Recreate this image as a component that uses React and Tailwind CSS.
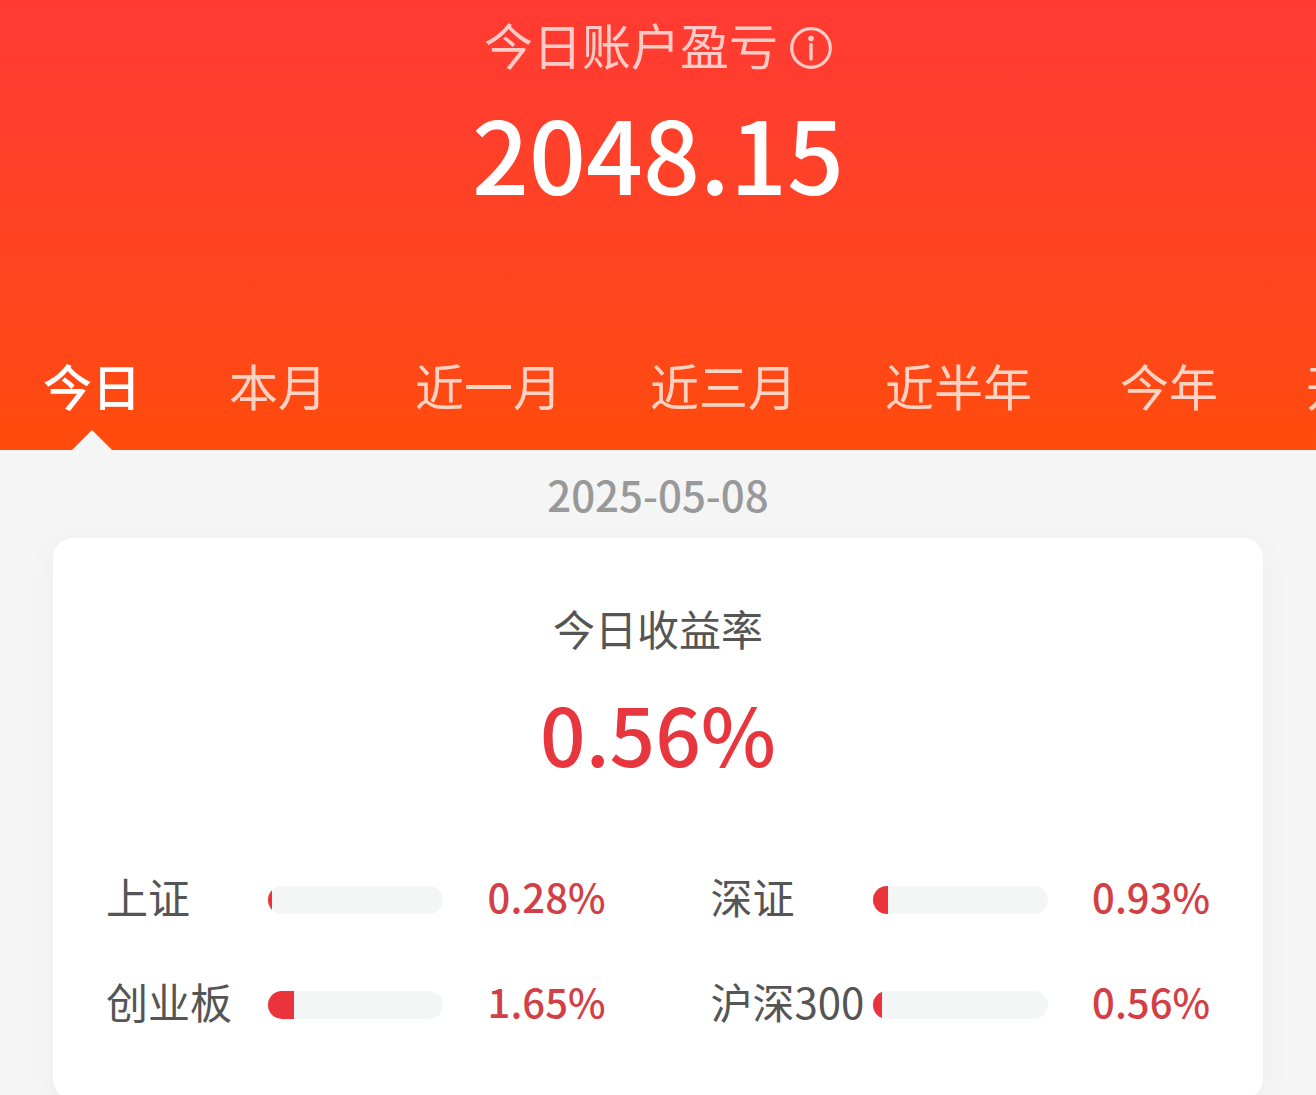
import React, { useState } from 'react';
import clsx from 'clsx';

const PERIODS = ['今日', '本月', '近一月', '近三月', '近半年', '今年', '开户以来'];

const INDEXES = [
  { name: '上证', value: '0.28%', fill: 2.3 },
  { name: '深证', value: '0.93%', fill: 8.6 },
  { name: '创业板', value: '1.65%', fill: 15 },
  { name: '沪深300', value: '0.56%', fill: 5.4 },
];

function InfoIcon() {
  return (
    <svg viewBox="0 0 42 42" className="h-[42px] w-[42px]" fill="none" aria-hidden="true">
      <circle cx="21" cy="21" r="19.3" stroke="currentColor" strokeWidth="3.2" />
      <circle cx="21" cy="11.5" r="2.8" fill="currentColor" />
      <path d="M21 17.5V32" stroke="currentColor" strokeWidth="3.4" strokeLinecap="round" />
    </svg>
  );
}

function PeriodTab({ label, active, onClick }) {
  return (
    <button
      type="button"
      onClick={onClick}
      className={clsx(
        'relative h-full shrink-0 pb-5 text-[49px] leading-[72px]',
        active ? 'font-medium text-white' : 'text-[#ffd3c3]'
      )}
    >
      {label}
      {active && (
        <span className="absolute bottom-0 left-1/2 h-5 w-10 -translate-x-1/2 bg-[#f5f5f5] [clip-path:polygon(50%_0,100%_100%,0_100%)]" />
      )}
    </button>
  );
}

function IndexRow({ name, value, fill }) {
  return (
    <li className="flex items-center text-[42px] leading-[60px]">
      <span className="w-[162px] shrink-0 whitespace-nowrap text-[#555555]">{name}</span>
      <span className="mt-2 h-7 w-[175px] shrink-0 overflow-hidden rounded-full bg-[#f4f6f6]">
        <span className="block h-full bg-[#eb333b]" style={{ width: `${fill}%` }} />
      </span>
      <span className="flex-1 text-right text-[40px] font-medium text-[#d33f46]">{value}</span>
    </li>
  );
}

export default function App() {
  const [period, setPeriod] = useState('今日');

  return (
    <div className="min-h-screen overflow-hidden bg-[#f5f5f5] pb-12 font-['Noto_Sans_CJK_SC',sans-serif]" lang="zh-CN">
      <header className="bg-linear-to-b from-[#ff3a33] to-[#ff4b0a] pt-2">
        <div className="flex items-center justify-center gap-3 text-[#ffcbc7]">
          <h1 className="text-[49px] leading-[72px]">今日账户盈亏</h1>
          <button type="button" aria-label="说明" className="mt-2">
            <InfoIcon />
          </button>
        </div>
        <p className="mt-5 text-center text-[100px] leading-[104px] font-medium text-white">2048.15</p>
        <nav className="mt-[136px] flex h-[110px] gap-[88px] overflow-hidden pl-[43px]">
          {PERIODS.map((p) => (
            <PeriodTab key={p} label={p} active={p === period} onClick={() => setPeriod(p)} />
          ))}
        </nav>
      </header>

      <main className="px-[53px]">
        <p className="py-3 text-center text-[42px] leading-[64px] font-medium text-[#999999]">2025-05-08</p>
        <section className="rounded-[20px] bg-white px-[53px] pt-[60px] pb-[68px] shadow-[0_8px_32px_rgba(0,0,0,0.04)]">
          <h2 className="text-center text-[42px] leading-[60px] text-[#555555]">今日收益率</h2>
          <p className="mt-6 text-center text-[80px] leading-[100px] font-medium text-[#e8363e]">0.56%</p>
          <ul className="mt-[84px] grid grid-cols-2 gap-x-[105px] gap-y-[45px]">
            {INDEXES.map((item) => (
              <IndexRow key={item.name} {...item} />
            ))}
          </ul>
        </section>
      </main>
    </div>
  );
}
